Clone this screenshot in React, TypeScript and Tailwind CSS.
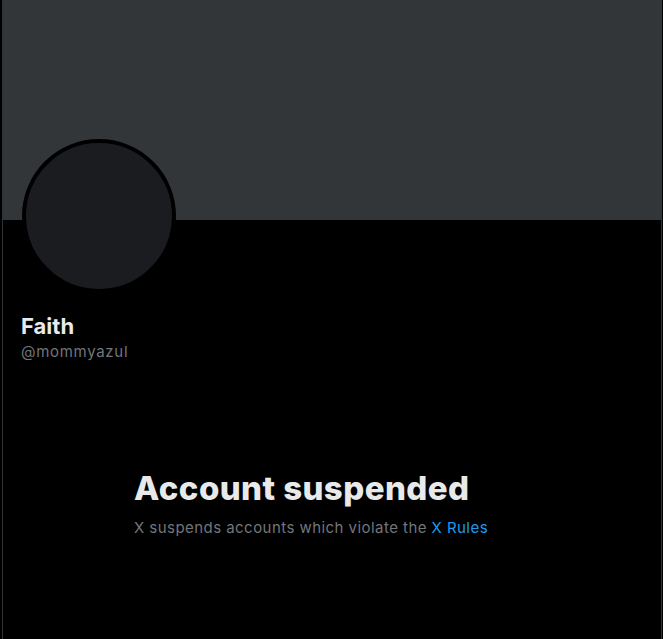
import React from "react";

export default function App() {
  return (
    <div className="w-[663px] h-[639px] bg-black overflow-hidden" style={{ fontFamily: 'Inter, "Liberation Sans", Arial, sans-serif' }}>
      <div className="ml-[2px] w-[660px] h-full border-x border-[#2f3336] flex flex-col">
        <div className="h-[220px] bg-[#333639] shrink-0" />
        <div className="ml-[19px] -mt-[81px] w-[154px] h-[154px] rounded-full border-4 border-black bg-[#1a1c1f] shrink-0" />
        <div className="ml-[18px] mt-[19px] flex flex-col">
          <div className="text-[22px] leading-[28px] font-bold text-[#e7e9ea]">Faith</div>
          <div className="text-[15px] leading-[20px] tracking-[0.7px] text-[#71767b] mt-[2px]">@mommyazul</div>
        </div>
        <div className="ml-[131px] mt-[106px] flex flex-col">
          <div className="text-[33px] leading-[40px] font-extrabold tracking-[0.42px] text-[#e7e9ea]">Account suspended</div>
          <div className="text-[15px] leading-[20px] tracking-[0.45px] text-[#71767b] mt-[10px]">
            X suspends accounts which violate the <span className="text-[#1d9bf0]">X Rules</span>
          </div>
        </div>
      </div>
    </div>
  );
}
